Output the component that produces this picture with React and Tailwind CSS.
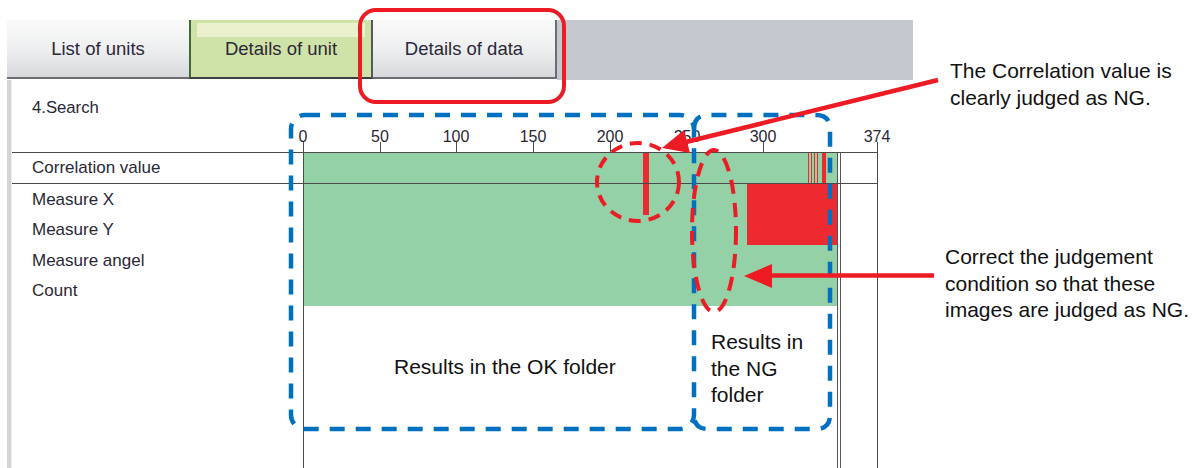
import React from 'react';

const ticks = [0, 50, 100, 150, 200, 250, 300, 374];
const PX_PER_UNIT = 574 / 374;

const G = 'bg-[#95d1a6]';
const R = 'bg-[#ec2a2f]';

// one slice of the bar strip
const Seg = ({ w, red, grow }) => (
    <div className={`${grow ? 'flex-1' : ''} ${red ? R : G}`} style={grow ? undefined : { width: w }} />
);

const Tab = ({ label, active, last }) => {
    if (active) {
        return (
            <div className="relative h-[59px] w-[184px] bg-[#cfe2a7] border-l-2 border-l-[#3d6a36] border-r-2 border-r-[#55585c] border-b-2 border-b-[#3d3f42] flex flex-col">
                {/* highlight strip along the top */}
                <div className="mx-[6px] mt-[3px] h-[14px] bg-[#eaf1cc]" />
                <div className="flex-1 flex items-center justify-center -mt-[17px]">
                    <span className="text-[18.5px] text-[#2b2838]">{label}</span>
                </div>
            </div>
        );
    }
    return (
        <div
            className={`h-[59px] ${last ? 'w-[184px] border-r-2 border-r-[#6a6d72]' : 'w-[182px]'} bg-gradient-to-b from-[#fafafa] via-[#eeeff0] to-[#d8d9dc] border-b-2 border-b-[#6a6d72] flex items-center justify-center`}
        >
            <span className="text-[18.5px] text-[#2b2838]">{label}</span>
        </div>
    );
};

// chart cell: left axis line, data strip, double end line, blank tail, right line
const ChartCell = ({ children }) => (
    <div className="flex w-[575px] border-x border-[#4a4a4a]">
        <div className="flex w-[533px]">{children}</div>
        <div className="w-[4px] border-x border-[#555]" />
        <div className="w-[36px]" />
    </div>
);

const Row = ({ label, h, className = '', children }) => (
    <div className={`flex ${className}`} style={{ height: h }}>
        <div className="w-[291px] pl-[20px] flex items-center text-[17px]">{label}</div>
        <ChartCell>{children}</ChartCell>
    </div>
);

const App = () => {
    return (
        <div className="relative w-[1201px] h-[468px] overflow-hidden bg-white font-['Liberation_Sans',Arial,sans-serif] text-[#2a2836]">
            {/* Tab strip */}
            <div className="flex items-start pt-[20px] pl-[7px] w-[913px]">
                <Tab label="List of units" />
                <Tab label="Details of unit" active />
                <Tab label="Details of data" last />
                <div className="flex-1 h-[60px] bg-[#c6c8cf]" />
            </div>

            {/* Panel */}
            <div className="flex h-[388px] ml-[7px]">
                <div className="w-[5px] bg-[#d3d5d9] border-r border-[#eceded]" />
                <div className="flex flex-col w-[866px]">
                    {/* title + axis */}
                    <div className="flex h-[72px]">
                        <div className="w-[291px] pl-[20px] pt-[18px] text-[16.7px] leading-[20px]">4.Search</div>
                        <div className="relative w-[575px]">
                            {ticks.map((v) => {
                                const x = Math.round(v * PX_PER_UNIT);
                                return (
                                    <React.Fragment key={v}>
                                        <div
                                            className="absolute top-[47px] -translate-x-1/2 text-[16px] leading-[20px]"
                                            style={{ left: x }}
                                        >
                                            {v}
                                        </div>
                                        <div className="absolute bottom-0 h-[10px] w-px bg-[#4a4a4a]" style={{ left: x }} />
                                    </React.Fragment>
                                );
                            })}
                        </div>
                    </div>

                    <Row label="Correlation value" h={32} className="border-y border-[#4a4a4a]">
                        <Seg w={339} />
                        <Seg w={6} red />
                        <Seg w={159} />
                        <Seg w={1} red />
                        <Seg w={2} />
                        <Seg w={1} red />
                        <Seg w={2} />
                        <Seg w={1} red />
                        <Seg w={2} />
                        <Seg w={1} red />
                        <Seg w={4} />
                        <Seg w={4} red />
                        <Seg grow />
                    </Row>
                    <Row label="Measure X" h={30.5}>
                        <Seg w={339} />
                        <Seg w={6} red />
                        <Seg w={98} />
                        <Seg grow red />
                    </Row>
                    <Row label="Measure Y" h={30.5}>
                        <Seg w={443} />
                        <Seg grow red />
                    </Row>
                    <Row label="Measure angel" h={30.5}>
                        <Seg grow />
                    </Row>
                    <Row label="Count" h={30.5}>
                        <Seg grow />
                    </Row>
                    <div className="flex-1 flex">
                        <div className="w-[291px]" />
                        <ChartCell />
                    </div>
                </div>
            </div>

            {/* Annotation drawing */}
            <svg className="absolute inset-0 pointer-events-none" width="1201" height="468">
                <rect x="360" y="10" width="204" height="92" rx="16" fill="none" stroke="#ed1c24" strokeWidth="4" />
                <rect x="291" y="115" width="403" height="314" rx="14" fill="none" stroke="#0070c0" strokeWidth="4.5" strokeDasharray="15 11" />
                <path
                    d="M694,129 Q694,115 708,115 H816 Q830,115 830,129 V415 Q830,429 816,429 H708 Q694,429 694,415"
                    fill="none"
                    stroke="#0070c0"
                    strokeWidth="4.5"
                    strokeDasharray="15 11"
                />
                <ellipse cx="638" cy="182" rx="41" ry="39" fill="none" stroke="#ed1c24" strokeWidth="4" strokeDasharray="12 8" />
                <ellipse cx="714" cy="231" rx="22" ry="81" fill="none" stroke="#ed1c24" strokeWidth="4" strokeDasharray="14 9" />
                <line x1="938" y1="80" x2="686" y2="142" stroke="#ed1c24" strokeWidth="4.5" />
                <polygon points="662,148 690,153 684,130" fill="#ed1c24" />
                <line x1="934" y1="275.5" x2="770" y2="275.5" stroke="#ed1c24" strokeWidth="4.5" />
                <polygon points="744,276 772,264 772,288" fill="#ed1c24" />
            </svg>

            {/* Annotation text */}
            <div className="absolute left-[394px] top-[355px] text-[21px] leading-[24px] text-[#111]">Results in the OK folder</div>
            <div className="absolute left-[711px] top-[329px] text-[21px] leading-[26.5px] text-[#111]">
                Results in
                <br />
                the NG
                <br />
                folder
            </div>
            <div className="absolute left-[950px] top-[57px] text-[21px] leading-[27px] text-[#111]">
                The Correlation value is
                <br />
                clearly judged as NG.
            </div>
            <div className="absolute left-[945px] top-[244px] text-[21px] leading-[26.5px] text-[#111]">
                Correct the judgement
                <br />
                condition so that these
                <br />
                images are judged as NG.
            </div>
        </div>
    );
};

export default App;
